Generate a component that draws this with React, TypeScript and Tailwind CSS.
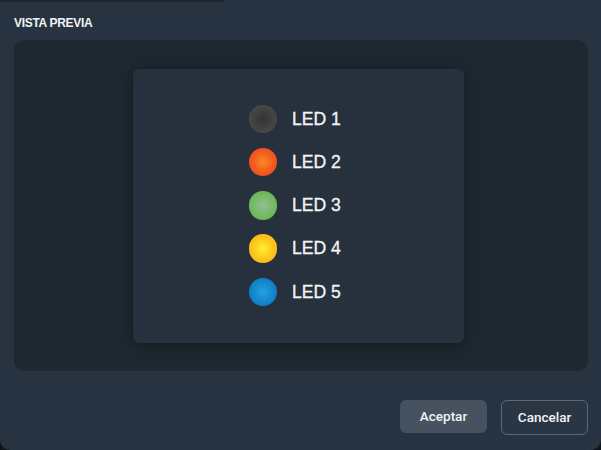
const leds = [
  { name: "LED 1", color: "radial-gradient(circle closest-side, #333333 0%, #484848 100%)" },
  { name: "LED 2", color: "radial-gradient(circle closest-side, #f58c20 0%, #f4601f 65%, #f14f20 100%)" },
  { name: "LED 3", color: "radial-gradient(circle closest-side, #98bd95 0%, #68b955 100%)" },
  { name: "LED 4", color: "radial-gradient(circle closest-side, #fff030 0%, #fdc01c 85%)" },
  { name: "LED 5", color: "radial-gradient(circle closest-side, #22a2e2 0%, #0e7dc2 100%)" },
];

export default function App() {
  return (
    <div className="w-[601px] h-[450px] bg-[#0f1419] overflow-hidden font-['Liberation_Sans',sans-serif]">
      <div className="relative h-full flex flex-col bg-[#283341] rounded-b-[10px] pl-[14px] pr-[13px]">
        <div className="absolute left-0 top-0 h-[2px] w-[224px] bg-[#1e2730] rounded-br-[4px]" />
        <h2 className="mt-[16px] h-[14px] leading-[14px] text-[12px] font-bold uppercase text-[#f1f3f5] tracking-[-0.3px]">
          Vista previa
        </h2>
        <div className="mt-[10px] h-[331px] rounded-[10px] bg-[#1e2830] flex items-center pl-[119px]">
          <div className="w-[331px] h-[274px] rounded-[6px] bg-[#27313d] shadow-[0_2px_14px_rgba(0,0,0,0.35)] flex flex-col gap-[14.75px] pt-[36.2px] pl-[116px]">
            {leds.map((led) => (
              <div key={led.name} className="flex items-center gap-[15px] h-[28.5px]">
                <div className="w-[28px] h-[28.5px] rounded-full" style={{ background: led.color }} />
                <span className="text-[17.6px] font-normal text-[#f3f5f7] [-webkit-text-stroke:0.3px_#f3f5f7]">{led.name}</span>
              </div>
            ))}
          </div>
        </div>
        <div className="mt-[29px] flex justify-end items-start gap-[14px]">
          <button className="w-[87px] h-[33px] rounded-[6px] bg-[#46525f] text-[13.5px] font-medium text-[#f1f3f5] font-['Roboto',sans-serif]">
            Aceptar
          </button>
          <button className="w-[87px] h-[35px] rounded-[6px] border border-[#5b6875] bg-[#2b3644] text-[13.5px] font-medium text-[#f1f3f5] font-['Roboto',sans-serif]">
            Cancelar
          </button>
        </div>
      </div>
    </div>
  );
}
